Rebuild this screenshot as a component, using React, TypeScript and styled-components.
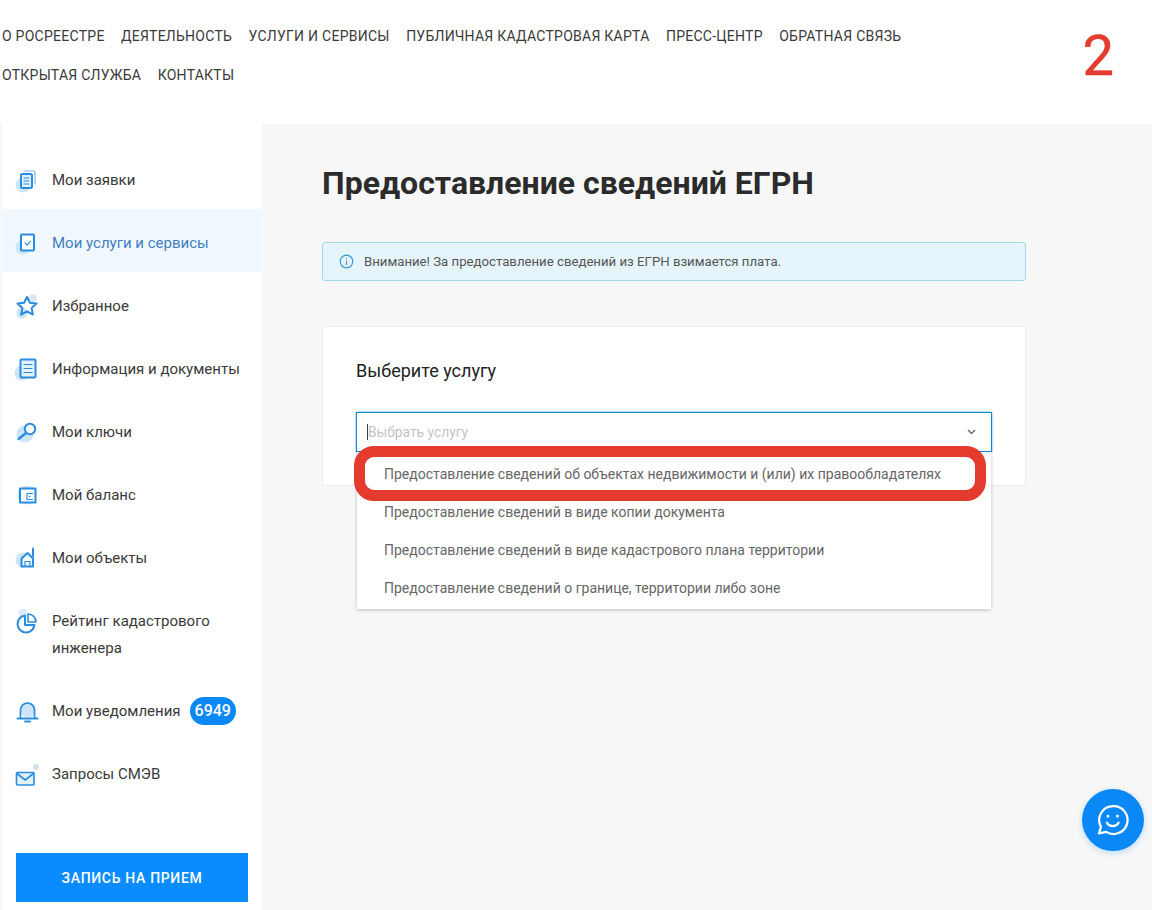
import React, { FC, ReactNode } from "react";
import styled, { createGlobalStyle } from "styled-components";

const GlobalStyle = createGlobalStyle`
  html, body {
    margin: 0;
    padding: 0;
    background: #fff;
    overflow: hidden;
  }
  body {
    font-family: Roboto, "Liberation Sans", sans-serif;
    color: #333;
  }
  * {
    box-sizing: border-box;
  }
`;

const Page = styled.div`
  position: relative;
  width: 1152px;
  height: 910px;
  overflow: hidden;
`;

const Header = styled.header`
  height: 124px;
  padding: 17px 0 0 2px;
  display: flex;
  justify-content: space-between;
  background: #fff;
`;

const TopNav = styled.nav`
  width: 1000px;
  display: flex;
  flex-wrap: wrap;
  align-content: flex-start;
  column-gap: 16.4px;
`;

const TopLink = styled.a`
  font-size: 14px;
  line-height: 39px;
  letter-spacing: 0.26px;
  text-transform: uppercase;
  color: #3a3a3a;
`;

const StepNumber = styled.div`
  margin: 8px 38px 0 0;
  font-size: 56px;
  line-height: 62px;
  color: #e33b2e;
  -webkit-text-stroke: 0.5px #e33b2e;
`;

const Body = styled.div`
  height: 786px;
  padding-left: 2px;
  display: flex;
  background: #f7f7f7;
`;

const Sidebar = styled.aside`
  width: 260px;
  padding-top: 22px;
  flex-shrink: 0;
  background: #fff;
`;

const MenuItem = styled.a<{ $active?: boolean }>`
  display: flex;
  align-items: flex-start;
  gap: 12px;
  padding: 21px 8px 15px 12px;
  font-size: 15px;
  line-height: 27px;
  color: ${(p) => (p.$active ? "#3f80bd" : "#3a3a3a")};
  background: ${(p) => (p.$active ? "#f1f8fd" : "transparent")};
`;

const IconBox = styled.span`
  width: 26px;
  height: 26px;
  margin-top: 1px;
  flex-shrink: 0;
  display: block;
`;

const Badge = styled.span`
  display: block;
  margin: -1px 0 0 -3px;
  padding: 0 5px;
  height: 28px;
  border-radius: 14px;
  font-size: 16px;
  font-weight: 500;
  line-height: 28px;
  color: #fff;
  background: #0a88f5;
`;

const RecordButton = styled.button`
  display: block;
  width: 232px;
  height: 49px;
  margin: 50px 0 0 14px;
  border: 0;
  font-family: inherit;
  font-size: 14px;
  font-weight: 500;
  letter-spacing: 0.68px;
  color: #fff;
  background: #0a8cff;
`;

const Main = styled.main`
  flex: 1;
  padding: 36px 0 0 60px;
`;

const Title = styled.h1`
  margin: 0;
  font-size: 32px;
  font-weight: 700;
  line-height: 46px;
  color: #2b2b2b;
`;

const Alert = styled.div`
  width: 704px;
  height: 39px;
  margin-top: 36px;
  padding-left: 16px;
  display: flex;
  align-items: center;
  gap: 10px;
  font-size: 13.2px;
  color: #555;
  background: #e6f5fc;
  border: 1px solid #a3d8ea;
  border-radius: 3px;
`;

const Card = styled.section`
  position: relative;
  width: 704px;
  height: 160px;
  margin-top: 45px;
  padding: 30px 33px 0;
  background: #fff;
  border: 1px solid #eee;
`;

const CardTitle = styled.h2`
  margin: 0;
  font-size: 18px;
  font-weight: 400;
  line-height: 28px;
  color: #222;
`;

const SelectBox = styled.div`
  position: relative;
  width: 636px;
  height: 40px;
  margin-top: 27px;
  padding-left: 10px;
  display: flex;
  align-items: center;
  border: 1px solid #1787d0;
  background: #fff;
  box-shadow: 0 0 2px rgba(23, 135, 208, 0.8);
`;

const Caret = styled.span`
  width: 1px;
  height: 16px;
  background: #444;
`;

const Placeholder = styled.span`
  font-size: 13.8px;
  color: #c4c4c4;
`;

const Chevron = styled.svg`
  position: absolute;
  right: 15px;
  top: 16px;
`;

const Dropdown = styled.ul`
  position: absolute;
  left: 34px;
  top: 125px;
  width: 634px;
  margin: 0;
  padding: 3px 0 2px;
  list-style: none;
  background: #fff;
  box-shadow: 0 1px 4px rgba(0, 0, 0, 0.22);
  z-index: 2;
`;

const Option = styled.li`
  height: 38px;
  padding-left: 27px;
  font-size: 14px;
  line-height: 38px;
  color: #666;
`;

const Highlight = styled.div`
  position: absolute;
  left: 354px;
  top: 446px;
  width: 632px;
  height: 55px;
  border: 11px solid #e53b2f;
  border-radius: 20px;
  z-index: 3;
`;

const ChatButton = styled.button`
  position: absolute;
  left: 1082px;
  top: 789px;
  width: 62px;
  height: 62px;
  padding: 0;
  display: flex;
  align-items: center;
  justify-content: center;
  border: 0;
  border-radius: 50%;
  background: #0a88f5;
  box-shadow: 0 2px 6px rgba(10, 136, 245, 0.25);
`;

const Glyph: FC<{ children: ReactNode }> = ({ children }) => (
  <IconBox>
    <svg width="26" height="26" viewBox="0 0 26 26" fill="none" stroke="#2a8ce0" strokeWidth="2" strokeLinejoin="round" strokeLinecap="round">
      {children}
    </svg>
  </IconBox>
);

const Blob: FC<{ cx: number; cy: number; r?: number }> = ({ cx, cy, r = 7.5 }) => (
  <circle cx={cx} cy={cy} r={r} fill="#cde5f9" stroke="none" />
);

const menu: { label: ReactNode; active?: boolean; icon: ReactNode }[] = [
  {
    label: "Мои заявки",
    icon: (
      <>
        <Blob cx={9} cy={17} />
        <path d="M10 3h10a1 1 0 0 1 1 1v12" strokeWidth="1.2" stroke="#7db9e8" />
        <rect x="7" y="6" width="11" height="14" rx="1.5" fill="#e4f1fb" />
        <path d="M10 10h5M10 13h5M10 16h5" strokeWidth="1.1" />
      </>
    ),
  },
  {
    label: "Мои услуги и сервисы",
    active: true,
    icon: (
      <>
        <Blob cx={9} cy={16} />
        <rect x="7" y="3.5" width="13" height="16" rx="1" fill="#fff" />
        <path d="M11 12l2.2 2.2 3.3-4.2" strokeWidth="1.1" />
      </>
    ),
  },
  {
    label: "Избранное",
    icon: (
      <>
        <Blob cx={8} cy={19} r={5.5} />
        <circle cx="19" cy="4" r="3.8" fill="#d9e6f2" stroke="none" />
        <path d="M13 2.8l2.9 6 6.6.8-4.9 4.5 1.3 6.5-5.9-3.3-5.9 3.3 1.3-6.5-4.9-4.5 6.6-.8z" />
      </>
    ),
  },
  {
    label: "Информация и документы",
    icon: (
      <>
        <Blob cx={8} cy={16} />
        <rect x="6.5" y="2.5" width="15" height="18" rx="1" fill="#e4f1fb" />
        <path d="M10 7.5h8M10 11.5h8M10 15.5h8" strokeWidth="1.1" />
      </>
    ),
  },
  {
    label: "Мои ключи",
    icon: (
      <>
        <Blob cx={11} cy={14} r={8.5} />
        <circle cx="16" cy="9" r="5.2" fill="#fff" />
        <path d="M12 13l-7.5 6" strokeWidth="2.4" />
      </>
    ),
  },
  {
    label: "Мой баланс",
    icon: (
      <>
        <Blob cx={13} cy={12} r={9.5} />
        <rect x="6" y="5.5" width="15.5" height="14" fill="#f4fafe" />
        <path d="M18.5 10.5h-5.5v6h5.5" strokeWidth="1.1" />
        <circle cx="15.6" cy="13.5" r="0.8" fill="#2a8ce0" stroke="none" />
      </>
    ),
  },
  {
    label: "Мои объекты",
    icon: (
      <>
        <Blob cx={9} cy={14} />
        <path d="M7.5 20.5v-8L13.5 7l5.5 5.5v8z" fill="#f4fafe" />
        <path d="M19 10V2.5" />
        <path d="M11 20.5v-5h5v5" strokeWidth="1.2" />
      </>
    ),
  },
  {
    label: (
      <>
        Рейтинг кадастрового
        <br />
        инженера
      </>
    ),
    icon: (
      <>
        <circle cx="9" cy="4" r="4.5" fill="#dcebf7" stroke="none" />
        <path d="M11 6.5a8.5 8.5 0 1 0 9.5 9.5H11z" strokeWidth="2" />
        <path d="M14 5a8 8 0 0 1 8 8h-8z" strokeWidth="1.6" fill="#fff" />
      </>
    ),
  },
  {
    label: "Мои уведомления",
    icon: (
      <>
        <Blob cx={14} cy={11} r={7.5} />
        <path d="M6.5 19v-8a7 7 0 0 1 14 0v8" strokeWidth="1.7" />
        <path d="M3.5 19.5h20" />
        <path d="M11 22.5h5" />
      </>
    ),
  },
  {
    label: "Запросы СМЭВ",
    icon: (
      <>
        <circle cx="22" cy="5" r="3" fill="#d3dfeb" stroke="none" />
        <rect x="2.5" y="10.5" width="17.5" height="12.5" rx="1" fill="#e4f1fb" strokeWidth="1.6" />
        <path d="M3 11.5l8.2 6.5 8.3-6.5" strokeWidth="1.6" />
      </>
    ),
  },
];

const App: FC = () => (
  <Page>
    <GlobalStyle />
    <Header>
      <TopNav>
        <TopLink>О Росреестре</TopLink>
        <TopLink>Деятельность</TopLink>
        <TopLink>Услуги и сервисы</TopLink>
        <TopLink>Публичная кадастровая карта</TopLink>
        <TopLink>Пресс-центр</TopLink>
        <TopLink>Обратная связь</TopLink>
        <TopLink>Открытая служба</TopLink>
        <TopLink>Контакты</TopLink>
      </TopNav>
      <StepNumber>2</StepNumber>
    </Header>
    <Body>
      <Sidebar>
        {menu.map((item, i) => (
          <MenuItem key={i} $active={item.active}>
            <Glyph>{item.icon}</Glyph>
            <span>{item.label}</span>
            {i === 8 && <Badge>6949</Badge>}
          </MenuItem>
        ))}
        <RecordButton>ЗАПИСЬ НА ПРИЕМ</RecordButton>
      </Sidebar>
      <Main>
        <Title>Предоставление сведений ЕГРН</Title>
        <Alert>
          <svg width="15" height="15" viewBox="0 0 15 15" fill="none" stroke="#3b9bd8" strokeWidth="1.2" strokeLinecap="round">
            <circle cx="7.5" cy="7.5" r="6.3" />
            <path d="M7.5 7v3.6" />
            <path d="M7.5 4.6v.2" />
          </svg>
          Внимание! За предоставление сведений из ЕГРН взимается плата.
        </Alert>
        <Card>
          <CardTitle>Выберите услугу</CardTitle>
          <SelectBox>
            <Caret />
            <Placeholder>Выбрать услугу</Placeholder>
            <Chevron width="9" height="6" viewBox="0 0 9 6" fill="none" stroke="#555" strokeWidth="1.2">
              <path d="M1 1l3.5 3.5L8 1" />
            </Chevron>
          </SelectBox>
          <Dropdown>
            <Option>Предоставление сведений об объектах недвижимости и (или) их правообладателях</Option>
            <Option>Предоставление сведений в виде копии документа</Option>
            <Option>Предоставление сведений в виде кадастрового плана территории</Option>
            <Option>Предоставление сведений о границе, территории либо зоне</Option>
          </Dropdown>
        </Card>
      </Main>
    </Body>
    <Highlight />
    <ChatButton aria-label="Чат">
      <svg width="38" height="38" viewBox="0 0 34 34" fill="none" stroke="#fff" strokeWidth="2" strokeLinecap="round" strokeLinejoin="round">
        <path d="M17.5 4.5a12.5 12.5 0 1 1-6.6 23.1L4.5 29l1.7-6A12.5 12.5 0 0 1 17.5 4.5z" />
        <path d="M11.5 19.5c2.2 4 8.3 4 10.5 0" />
        <path d="M12.5 13.5v.1M21 13.5v.1" strokeWidth="2.6" />
      </svg>
    </ChatButton>
  </Page>
);

export default App;
